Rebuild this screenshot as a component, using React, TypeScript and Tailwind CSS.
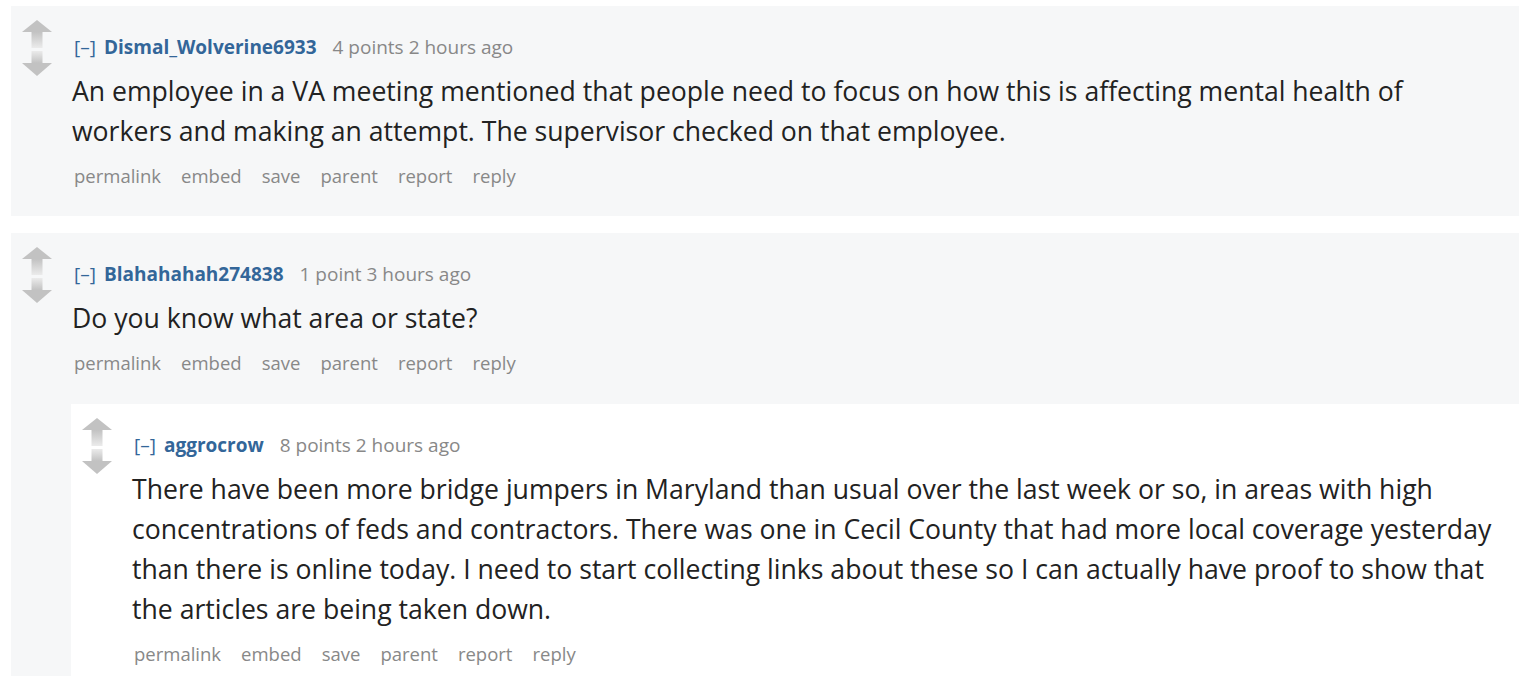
import React from "react";

type CommentProps = {
  author: string;
  points: string;
  time: string;
  lines: string[];
  nested?: boolean;
  children?: React.ReactNode;
};

const VoteArrows = () => {
  return (
    <svg width="30" height="56" viewBox="0 0 30 56">
      <defs>
        <linearGradient id="upShaft" x1="0" y1="0" x2="0" y2="1">
          <stop offset="0" stopColor="#c2c2c2" />
          <stop offset="1" stopColor="#ebebeb" />
        </linearGradient>
        <linearGradient id="downShaft" x1="0" y1="0" x2="0" y2="1">
          <stop offset="0" stopColor="#ebebeb" />
          <stop offset="1" stopColor="#c2c2c2" />
        </linearGradient>
      </defs>
      {/* up */}
      <polygon points="15,0 30,12 0,12" fill="#c2c2c2" />
      <rect x="9.5" y="12" width="11" height="16" fill="url(#upShaft)" />
      {/* down */}
      <rect x="9.5" y="31" width="11" height="12" fill="url(#downShaft)" />
      <polygon points="0,43 30,43 15,56" fill="#c2c2c2" />
    </svg>
  );
};

const Comment = ({ author, points, time, lines, nested, children }: CommentProps) => {
  return (
    <div
      className={`flex pl-[11px] ${nested ? "bg-white -ml-px" : "bg-[#f6f7f8]"}`}
    >
      <div className="w-[30px] shrink-0 pt-[14px]">
        <VoteArrows />
      </div>
      <div className={`flex-1 ml-5 pt-[27px] ${children ? "" : "pb-[26px]"}`}>
        {/* tagline */}
        <div className="h-7 flex items-center text-[19px] leading-7">
          <span className="text-[#369] ml-0.5">[–]</span>
          <span className="text-[#369] font-bold ml-2">{author}</span>
          <span className="text-[#888] ml-4">
            {points} {time}
          </span>
        </div>
        {/* body */}
        <div className="mt-2.5 text-[26.6px] leading-10 text-[#222] whitespace-nowrap">
          {lines.map((line, i) => (
            <p key={i}>{line}</p>
          ))}
        </div>
        {/* buttons */}
        <div className="mt-[11px] h-7 flex items-center gap-5 text-[18.5px] text-[#888] ml-0.5">
          <span>permalink</span>
          <span>embed</span>
          <span>save</span>
          <span>parent</span>
          <span>report</span>
          <span>reply</span>
        </div>
        {children && <div className="mt-[27px]">{children}</div>}
      </div>
    </div>
  );
};

export default function App() {
  return (
    <div className="h-[676px] bg-white pt-1.5 pl-[11px] font-['Open_Sans',sans-serif] overflow-hidden">
      <div className="flex flex-col gap-[17px]">
        <Comment
          author="Dismal_Wolverine6933"
          points="4 points"
          time="2 hours ago"
          lines={[
            "An employee in a VA meeting mentioned that people need to focus on how this is affecting mental health of",
            "workers and making an attempt. The supervisor checked on that employee.",
          ]}
        />
        <Comment
          author="Blahahahah274838"
          points="1 point"
          time="3 hours ago"
          lines={["Do you know what area or state?"]}
        >
          <Comment
            nested
            author="aggrocrow"
            points="8 points"
            time="2 hours ago"
            lines={[
              "There have been more bridge jumpers in Maryland than usual over the last week or so, in areas with high",
              "concentrations of feds and contractors. There was one in Cecil County that had more local coverage yesterday",
              "than there is online today. I need to start collecting links about these so I can actually have proof to show that",
              "the articles are being taken down.",
            ]}
          />
        </Comment>
      </div>
    </div>
  );
}
